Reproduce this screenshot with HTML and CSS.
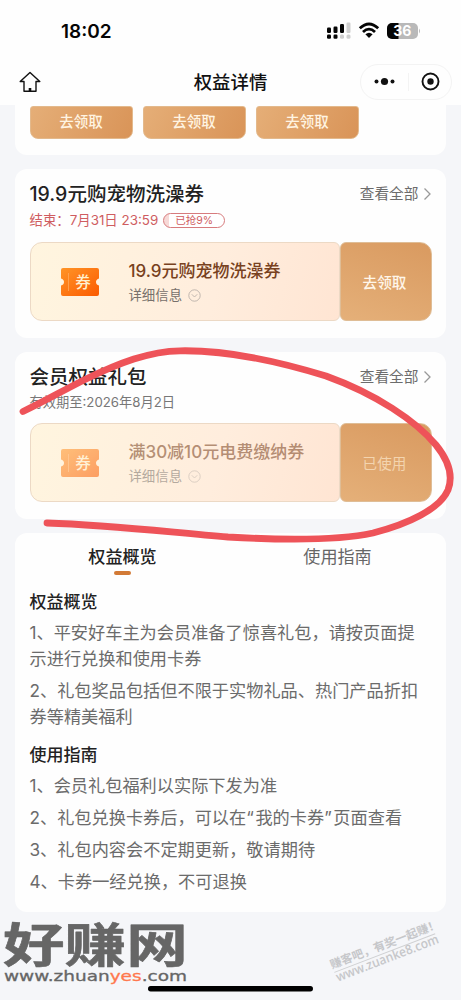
FILE: index.html
```html
<!DOCTYPE html>
<html lang="zh-CN">
<head>
<meta charset="utf-8">
<meta name="viewport" content="width=device-width, initial-scale=1">
<title>权益详情</title>
<link rel="stylesheet" href="styles.css">
</head>
<body>
<div class="screen">
  <header class="top">
    <div class="status">
      <span class="time">18:02</span>
      <svg class="status-icons" width="100" height="20" viewBox="0 0 100 20">
        <g fill="#050505">
          <rect x="2" y="7.5" width="4" height="5.5" rx="1.2"/><rect x="8.5" y="6.5" width="4" height="6.5" rx="1.2"/><rect x="15" y="4" width="4" height="9" rx="1.2"/>
          <rect x="2" y="14.5" width="4" height="4.2" rx="1.2"/><rect x="8.5" y="14.5" width="4" height="4.2" rx="1.2"/>
        </g>
        <g fill="#cfcfcf"><rect x="21.5" y="2.5" width="4" height="10.5" rx="1.2"/><rect x="15" y="14.5" width="4" height="4.2" rx="1.5"/><rect x="21.5" y="14.5" width="4" height="4.2" rx="1.5"/></g>
        <g fill="none" stroke="#050505" stroke-width="2.8"><path d="M34.8 8.3Q44 -.4 53.2 8.3"/><path d="M38 12Q44 6.3 50 12"/></g>
        <path d="M40.4 14.3Q44 11 47.6 14.3L44 18Z" fill="#050505"/>
        <rect x="62" y="3" width="31" height="16" rx="5" fill="#b9b9b9"/>
        <path d="M73.5 3H67a5 5 0 0 0-5 5v6a5 5 0 0 0 5 5h6.5Z" fill="#050505"/>
        <path d="M94 8.5q2 2.5 0 5Z" fill="#b9b9b9"/>
        <text class="battery" x="77.2" y="16" text-anchor="middle">36</text>
      </svg>
    </div>
    <nav class="nav">
      <svg class="home" width="24" height="24" viewBox="0 0 24 24" fill="none" stroke="#111" stroke-width="1.4" stroke-linejoin="round"><path d="M12 2.5 2.2 11.5H6V21.3H18V11.5H21.8Z"/><path d="M12 18v3.3" stroke-width="2.6"/></svg>
      <h1 class="nav-title">权益详情</h1>
      <div class="capsule">
        <svg width="92" height="36" viewBox="0 0 92 36"><g fill="#111"><circle cx="16.5" cy="17.5" r="2"/><circle cx="24.5" cy="17.5" r="3.6"/><circle cx="32.5" cy="17.5" r="2"/><circle cx="70.5" cy="17.5" r="3.2"/></g><circle cx="70.5" cy="17.5" r="8" fill="none" stroke="#111" stroke-width="1.9"/><path d="M48.5 9v18" stroke="#f3f3f3"/></svg>
      </div>
    </nav>
  </header>

  <main class="content">
    <section class="card claims">
      <div class="claim">去领取</div><div class="claim">去领取</div><div class="claim">去领取</div>
    </section>

    <section class="card offer">
      <div class="head"><h2>19.9元购宠物洗澡券</h2><a class="all">查看全部<svg width="9" height="14" viewBox="0 0 9 14"><path d="m1.5 1.5 5.5 5.5-5.5 5.5"/></svg></a></div>
      <div class="deadline"><span>结束：7月31日 23:59</span><span class="pill">已抢9%</span></div>
      <div class="coupon">
        <div class="coupon-main">
          <svg class="ticket" width="38" height="28" viewBox="0 0 38 28"><defs><linearGradient id="hot" x1="0" y1="0" x2="1" y2="1"><stop offset="0" stop-color="#ff9427"/><stop offset="1" stop-color="#fb5b00"/></linearGradient></defs><path d="M2 0H36Q38 0 38 2V10.5Q35 11.5 35 14T38 17.5V26Q38 28 36 28H2Q0 28 0 26V17.5Q3 16.5 3 14T0 10.5V2Q0 0 2 0Z" fill="url(#hot)"/><path d="M7.5 5v18" stroke="#ffa85a" stroke-width=".8"/><text class="ticket-text" x="22" y="20" text-anchor="middle">券</text></svg>
          <div class="coupon-text"><div class="coupon-name">19.9元购宠物洗澡券</div><div class="more">详细信息<svg width="13" height="13" viewBox="0 0 13 13"><circle cx="6.5" cy="6.5" r="5.7"/><path d="m3.8 5.3 2.7 2.7 2.7-2.7"/></svg></div></div>
        </div>
        <div class="coupon-action">去领取</div>
      </div>
    </section>

    <section class="card offer gift">
      <div class="head"><h2>会员权益礼包</h2><a class="all">查看全部<svg width="9" height="14" viewBox="0 0 9 14"><path d="m1.5 1.5 5.5 5.5-5.5 5.5"/></svg></a></div>
      <div class="valid">有效期至:2026年8月2日</div>
      <div class="coupon used">
        <div class="coupon-main">
          <svg class="ticket" width="38" height="28" viewBox="0 0 38 28"><path d="M2 0H36Q38 0 38 2V10.5Q35 11.5 35 14T38 17.5V26Q38 28 36 28H2Q0 28 0 26V17.5Q3 16.5 3 14T0 10.5V2Q0 0 2 0Z" fill="url(#hot)"/><path d="M7.5 5v18" stroke="#ffa85a" stroke-width=".8"/><text class="ticket-text" x="22" y="20" text-anchor="middle">券</text></svg>
          <div class="coupon-text"><div class="coupon-name">满30减10元电费缴纳券</div><div class="more">详细信息<svg width="13" height="13" viewBox="0 0 13 13"><circle cx="6.5" cy="6.5" r="5.7"/><path d="m3.8 5.3 2.7 2.7 2.7-2.7"/></svg></div></div>
        </div>
        <div class="coupon-action">已使用</div>
      </div>
    </section>

    <section class="card guide">
      <div class="tabs"><div class="tab active">权益概览</div><div class="tab">使用指南</div></div>
      <h3>权益概览</h3>
      <p>1、平安好车主为会员准备了惊喜礼包，请按页面提<br>示进行兑换和使用卡券</p>
      <p>2、礼包奖品包括但不限于实物礼品、热门产品折扣<br>券等精美福利</p>
      <h3 class="second">使用指南</h3>
      <p>1、会员礼包福利以实际下发为准</p>
      <p>2、礼包兑换卡券后，可以在<span class="quote">“</span>我的卡券<span class="quote">”</span>页面查看</p>
      <p>3、礼包内容会不定期更新，敬请期待</p>
      <p>4、卡券一经兑换，不可退换</p>
    </section>
  </main>

  <svg class="overlay" width="461" height="1000" viewBox="0 0 461 1000">
    <path class="marker" d="M23 411.5C45 401 64 390 84 380C119 363 150 351 180 350.8C222 350 274 360 326 376C376 394 416 421 436 445C449 461 453 477 448 490C440 509 408 524 373 533C336 541 280 540 228 537C167 532 110 525 47 523"/>
    <text class="brand" transform="translate(3 962) scale(1.31 1)" x="0" y="0">好赚网</text>
    <text class="brand-url" x="4" y="981" textLength="183" lengthAdjust="spacingAndGlyphs">www.zhuan<tspan class="accent">yes</tspan>.com</text>
    <rect x="148" y="986" width="165" height="5.5" rx="2.7" fill="#000"/>
    <g class="stamp" transform="translate(332 969) rotate(-21)">
      <text class="slogan" x="0" y="0" textLength="116" lengthAdjust="spacingAndGlyphs">赚客吧，有奖一起赚！</text>
      <path d="M1 4H109"/>
      <text class="site" x="1" y="14" textLength="109" lengthAdjust="spacingAndGlyphs">www.zuanke8.com</text>
    </g>
  </svg>
</div>
</body>
</html>
```
FILE: styles.css
```css
* { box-sizing: border-box; }
body { margin: 0; background: #f5f6f9; font-family: Inter, "Noto Sans CJK SC", sans-serif; color: #222; }
h1, h2, h3, p { margin: 0; }
svg { display: block; flex: none; }
.screen { position: relative; width: 461px; height: 1000px; overflow: hidden; }
.top { height: 105px; background: #fefefe; }
.status { height: 58px; padding: 20px 36px 0 61px; display: flex; justify-content: space-between; }
.time { font-size: 19px; line-height: 24px; font-weight: 600; color: #050505; }
.battery { font-size: 14px; font-weight: 700; fill: #fff; }
.nav { height: 47px; padding: 0 9px 0 18px; display: grid; grid-template-columns: 83px 1fr 92px; align-items: center; }
.nav-title { text-align: center; font-size: 18.4px; line-height: 26px; font-weight: 500; color: #111; }
.capsule { height: 36px; border: 1px solid #f3f3f3; border-radius: 18px; display: flex; align-items: center; justify-content: center; }
.content { padding: 0 15px; display: flex; flex-direction: column; gap: 14px; }
.card { background: #fefefe; border-radius: 12px; padding: 0 14.5px; }
.claims { height: 50px; border-radius: 0 0 12px 12px; padding-top: 1px; display: flex; gap: 10px; }
.claim { width: 103px; height: 33px; border-radius: 3px 3px 8px 8px; background: linear-gradient(115deg, #e5ae77, #d99458); border: 1px solid #e3b98c; color: #fff4e2; font-size: 14.5px; font-weight: 500; text-align: center; line-height: 29px; }
.offer { height: 169px; }
.gift { height: 167px; }
.head { height: 46px; padding-top: 4px; display: flex; align-items: center; justify-content: space-between; }
h2 { font-size: 19.5px; line-height: 28px; font-weight: 500; }
.all { display: flex; align-items: center; gap: 4px; font-size: 14.7px; line-height: 20px; color: #6c6c6c; }
.all svg { fill: none; stroke: #999; stroke-width: 1.3; }
.deadline { height: 27px; display: flex; align-items: flex-start; gap: 5px; font-size: 13.4px; line-height: 11px; color: #cf5c60; }
.deadline > span:first-child { white-space: nowrap; }
.pill { width: 62px; height: 15px; margin-top: -2px; border: 1px solid #d77b7d; border-radius: 8px; font-size: 10.5px; line-height: 13px; text-align: center; background: linear-gradient(90deg, #f7d9d7 0 9%, #fff 9%); }
.valid { height: 25px; font-size: 13.25px; line-height: 8px; color: #777; }
.coupon { height: 79px; display: flex; }
.coupon-main { width: 310px; border: 1px solid #ecd9c5; border-radius: 12px 6px 6px 12px; background: linear-gradient(105deg, #fff5df, #ffeddd 60%, #ffe5d3); display: flex; align-items: center; padding-left: 30.4px; gap: 29.6px; }
.coupon-text { padding-top: 3px; }
.coupon-action { width: 92px; border: 1px solid #dfbd96; border-radius: 6px 12px 12px 6px; background: linear-gradient(20deg, #e5b079, #d99a60); color: #fff6e9; font-size: 14.6px; font-weight: 500; padding-right: 2px; display: flex; align-items: center; justify-content: center; }
.ticket-text { font-size: 15.5px; font-weight: 500; fill: #fff0d0; }
.coupon-name { font-size: 17px; line-height: 24px; font-weight: 500; color: #784120; white-space: nowrap; }
.more { display: flex; align-items: center; gap: 6px; font-size: 13.4px; line-height: 24px; color: #77706b; }
.more svg { fill: none; stroke: #b9b0a9; stroke-width: .9; }
.used .ticket, .used .coupon-text { opacity: .55; }
.used .coupon-action { color: #f3d4af; font-weight: 400; }
.guide { height: 379px; padding-top: 11px; }
.tabs { height: 45px; padding: 0 0 0 8px; display: flex; }
.tab { flex: none; width: 170px; font-size: 17.1px; line-height: 26px; text-align: center; color: #666; margin-right: 45px; }
.active { color: #222; font-weight: 500; }
.active::after { content: ""; display: block; width: 17px; height: 3.5px; margin: 1px auto 0; border-radius: 2px; background: #d27a36; }
h3 { font-size: 17px; line-height: 26px; height: 31.4px; font-weight: 500; }
.second { margin-top: 11.5px; }
.guide p { font-size: 17.19px; line-height: 26px; margin-bottom: 5.9px; color: #6b6b6b; white-space: nowrap; }
.quote { letter-spacing: 1.6px; }
.overlay { position: absolute; inset: 0; pointer-events: none; }
.marker { fill: none; stroke: #ee5359; stroke-width: 6.8; stroke-linecap: round; stroke-linejoin: round; }
.brand { font-size: 47px; font-weight: 700; fill: #666; stroke: #666; stroke-width: .6; stroke-linejoin: round; }
.brand-url { font-family: "DejaVu Sans", sans-serif; font-size: 14px; fill: #666; stroke: #666; stroke-width: .3; }
.accent { fill: #ff784e; stroke: #ff784e; }
.stamp { fill: #c6c7ca; stroke: none; }
.stamp path { stroke: #cfd0d2; stroke-width: 1; }
.slogan { font-size: 11.5px; font-weight: 700; }
.site { font-family: "Open Sans", sans-serif; font-size: 13px; font-weight: 600; }
```
